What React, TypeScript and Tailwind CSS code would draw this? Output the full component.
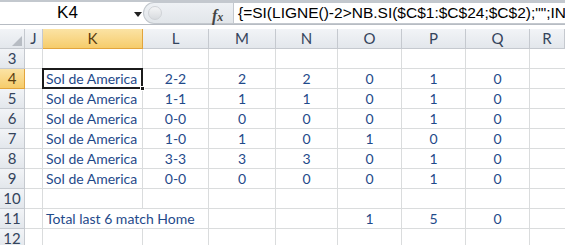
import React from "react";

const cols = ["J", "K", "L", "M", "N", "O", "P", "Q", "R"];

type Row = { n: number; k?: string; vals?: (string | number)[]; total?: boolean };

const rows: Row[] = [
  { n: 3 },
  { n: 4, k: "Sol de America", vals: ["2-2", 2, 2, 0, 1, 0] },
  { n: 5, k: "Sol de America", vals: ["1-1", 1, 1, 0, 1, 0] },
  { n: 6, k: "Sol de America", vals: ["0-0", 0, 0, 0, 1, 0] },
  { n: 7, k: "Sol de America", vals: ["1-0", 1, 0, 1, 0, 0] },
  { n: 8, k: "Sol de America", vals: ["3-3", 3, 3, 0, 1, 0] },
  { n: 9, k: "Sol de America", vals: ["0-0", 0, 0, 0, 1, 0] },
  { n: 10 },
  { n: 11, k: "Total last 6 match Home", vals: ["", "", "", 1, 5, 0], total: true },
  { n: 12 },
];

const cellFont = { fontFamily: "Lato, 'Noto Sans', sans-serif" };

function HeaderCell({ label, active }: { label: string; active?: boolean }) {
  return (
    <div
      className={`flex items-center justify-center border-r border-b text-[15px] ${
        active
          ? "bg-gradient-to-b from-[#fbe3a4] to-[#f6cc6a] border-[#e2a43c] text-[#5a3d10]"
          : "bg-gradient-to-b from-[#f2f4f7] to-[#e3e7ec] border-[#c5c9cf] text-[#34445c]"
      }`}
      style={cellFont}
    >
      {label}
    </div>
  );
}

export default function App() {
  return (
    <div className="w-[565px] h-[245px] overflow-hidden bg-white select-none">
      {/* formula bar */}
      <div className="h-[29px] bg-[#e3e7ec] border-t-2 border-[#c3c8ce] flex flex-col">
        <div className="h-[22px] flex bg-white">
          <div className="w-[143px] flex items-center relative">
            <span className="flex-1 text-center text-[17px] text-black pr-2" style={{ fontFamily: "'Liberation Sans', Arial, sans-serif" }}>
              K4
            </span>
            <svg width="8" height="5" viewBox="0 0 8 5" className="absolute left-[134px] top-[10px]">
              <path d="M0 0h8L4 5z" fill="#222" />
            </svg>
          </div>
          <div className="w-[90px] bg-gradient-to-b from-[#eef1f4] to-[#e2e6ea] rounded-l-full border-l border-y border-[#c3c8ce] flex items-center relative">
            <div className="ml-[4px] w-[14px] h-[14px] rounded-full bg-gradient-to-b from-[#f4f5f6] to-[#d8dbdf] border border-[#d0d3d7]" />
            <span className="absolute left-[68px] top-[1px] italic text-[16px] text-[#444] font-bold" style={{ fontFamily: "'Liberation Serif', serif" }}>
              f<span className="text-[12px]">x</span>
            </span>
          </div>
          <div className="flex-1 border border-[#c3c8ce] border-r-0 flex items-center pl-[4px] overflow-hidden">
            <span className="whitespace-nowrap text-[15.5px] text-black" style={{ fontFamily: "'Liberation Sans', Arial, sans-serif" }}>
              {'{=SI(LIGNE()-2>NB.SI($C$1:$C$24;$C$2);"";INDEX($D$1:$D$24;EQUIV(LIGNE()-2;$C$1:$C$24;0)))}'}
            </span>
          </div>
        </div>
        <div className="flex-1 border-t border-[#b7bcc3] bg-white" />
      </div>

      {/* grid */}
      <div
        className="grid grid-cols-[25px_18px_100px_66px_67px_62px_64px_64px_64px_1fr] auto-rows-[20px]"
        style={cellFont}
      >
        <div className="relative border-r border-b border-[#c5c9cf] bg-gradient-to-b from-[#f2f4f7] to-[#e3e7ec]">
          <svg width="10" height="10" viewBox="0 0 10 10" className="absolute right-[2px] bottom-[2px]">
            <path d="M10 0V10H0z" fill="#b7bcc3" />
          </svg>
        </div>
        {cols.map((c) => (
          <HeaderCell key={c} label={c} active={c === "K"} />
        ))}

        {rows.map((r) => (
          <React.Fragment key={r.n}>
            <HeaderCell label={String(r.n)} active={r.n === 4} />
            <div className="border-r border-b border-[#dadcdd]" />
            <div
              className={`relative border-b border-[#dadcdd] flex items-center pl-[3px] text-[14px] text-[#1f4a8a] whitespace-nowrap ${
                r.total ? "" : "border-r"
              }`}
            >
              {r.k && <span className={r.total ? "relative z-10" : ""}>{r.k}</span>}
              {r.n === 4 && (
                <>
                  <div className="absolute -left-px -top-px -right-px -bottom-px border-2 border-[#1b1b1b] pointer-events-none" />
                  <div className="absolute -right-[3px] -bottom-[3px] w-[5px] h-[5px] bg-[#1b1b1b] border border-white z-10" />
                </>
              )}
            </div>
            {[0, 1, 2, 3, 4, 5].map((i) => (
              <div
                key={i}
                className="border-r border-b border-[#dadcdd] flex items-center justify-center text-[14px] text-[#1f4a8a]"
              >
                {r.vals ? r.vals[i] : ""}
              </div>
            ))}
            <div className="border-b border-[#dadcdd]" />
          </React.Fragment>
        ))}
      </div>
    </div>
  );
}
